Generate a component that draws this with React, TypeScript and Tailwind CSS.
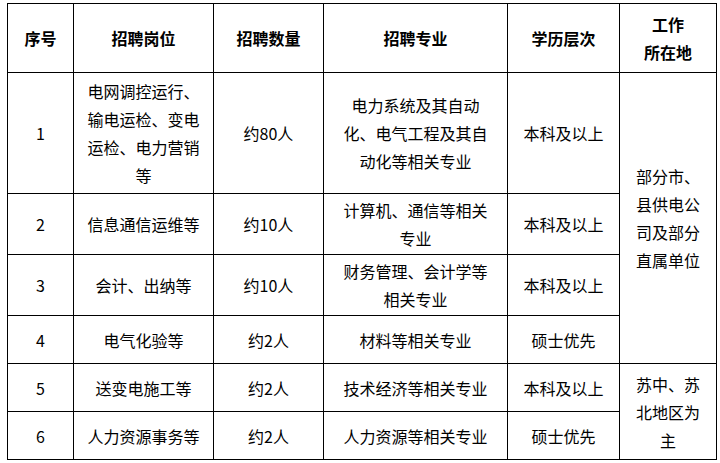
import React from 'react';

type Row = {
  no: string;
  post: string;
  count: string;
  major: string;
  degree: string;
};

const rows: Row[] = [
  { no: '1', post: '电网调控运行、输电运检、变电运检、电力营销等', count: '约80人', major: '电力系统及其自动化、电气工程及其自动化等相关专业', degree: '本科及以上' },
  { no: '2', post: '信息通信运维等', count: '约10人', major: '计算机、通信等相关专业', degree: '本科及以上' },
  { no: '3', post: '会计、出纳等', count: '约10人', major: '财务管理、会计学等相关专业', degree: '本科及以上' },
  { no: '4', post: '电气化验等', count: '约2人', major: '材料等相关专业', degree: '硕士优先' },
  { no: '5', post: '送变电施工等', count: '约2人', major: '技术经济等相关专业', degree: '本科及以上' },
  { no: '6', post: '人力资源事务等', count: '约2人', major: '人力资源等相关专业', degree: '硕士优先' },
];

const heights = ['h-[121px]', 'h-[61px]', 'h-[61px]', 'h-[48px]', 'h-[48px]', 'h-[48px]'];

const cell = 'border border-black px-[10px] text-center align-middle';

export default function App() {
  return (
    <div
      className="min-h-screen bg-white pl-[7px] pt-[3px] text-[16px] leading-[28px] text-black"
      style={{ fontFamily: '"Noto Sans CJK SC", "Liberation Sans", sans-serif' }}
    >
      <table className="w-[709px] table-fixed border-collapse">
        <colgroup>
          <col className="w-[66px]" />
          <col className="w-[140px]" />
          <col className="w-[110px]" />
          <col className="w-[184px]" />
          <col className="w-[112px]" />
          <col className="w-[97px]" />
        </colgroup>
        <thead>
          <tr className="h-[69px] font-bold">
            <th className={cell}>序号</th>
            <th className={cell}>招聘岗位</th>
            <th className={cell}>招聘数量</th>
            <th className={cell}>招聘专业</th>
            <th className={cell}>学历层次</th>
            <th className={cell}>
              工作
              <br />
              所在地
            </th>
          </tr>
        </thead>
        <tbody>
          {rows.map((r, i) => (
            <tr key={r.no} className={heights[i]}>
              <td className={cell}>{r.no}</td>
              <td className={cell}>{r.post}</td>
              <td className={cell}>{r.count}</td>
              <td className={`${cell} px-[15px]`}>{r.major}</td>
              <td className={cell}>{r.degree}</td>
              {i === 0 && (
                <td rowSpan={4} className={cell}>
                  部分市、县供电公司及部分直属单位
                </td>
              )}
              {i === 4 && (
                <td rowSpan={2} className={cell}>
                  苏中、苏北地区为主
                </td>
              )}
            </tr>
          ))}
        </tbody>
      </table>
    </div>
  );
}
